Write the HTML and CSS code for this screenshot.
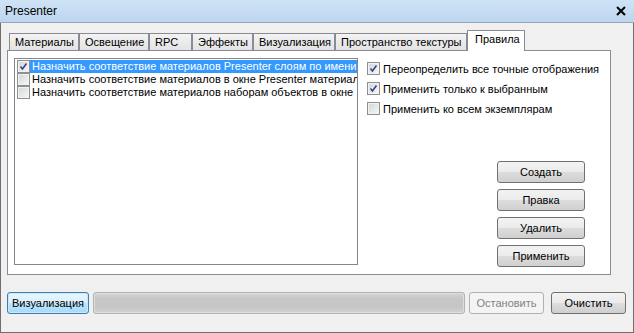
FILE: index.html
```html
<!DOCTYPE html>
<html lang="ru">
<head>
    <meta charset="UTF-8">
    <title>Presenter</title>
    <link rel="stylesheet" href="styles.css">
</head>
<body>
    <div class="window">
        <div class="titlebar">
            <span class="title">Presenter</span>
            <svg class="close" width="10" height="10" viewBox="0 0 10 10">
                <path d="M1 1 L9 9 M9 1 L1 9" stroke="#000" stroke-width="2"/>
            </svg>
        </div>

        <div class="content">
            <div class="tabs">
                <div class="tab tab-materials">Материалы</div>
                <div class="tab tab-light">Освещение</div>
                <div class="tab tab-rpc">RPC</div>
                <div class="tab tab-effects">Эффекты</div>
                <div class="tab tab-render">Визуализация</div>
                <div class="tab tab-space">Пространство текстуры</div>
                <div class="tab tab-rules active">Правила</div>
            </div>

            <div class="panel">
                <div class="listbox">
                    <div class="list-row">
                        <span class="cb checked"><svg viewBox="0 0 13 13"><path d="M3 6.5 L5.3 9.5 L10 3"/></svg></span>
                        <span class="list-text selected">Назначить соответствие материалов Presenter слоям по имени</span>
                    </div>
                    <div class="list-row">
                        <span class="cb"></span>
                        <span class="list-text">Назначить соответствие материалов в окне Presenter материалам</span>
                    </div>
                    <div class="list-row">
                        <span class="cb"></span>
                        <span class="list-text">Назначить соответствие материалов наборам объектов в окне</span>
                    </div>
                </div>

                <div class="side">
                    <div class="options">
                        <label class="option">
                            <span class="cb checked"><svg viewBox="0 0 13 13"><path d="M3 6.5 L5.3 9.5 L10 3"/></svg></span>
                            Переопределить все точные отображения
                        </label>
                        <label class="option">
                            <span class="cb checked"><svg viewBox="0 0 13 13"><path d="M3 6.5 L5.3 9.5 L10 3"/></svg></span>
                            Применить только к выбранным
                        </label>
                        <label class="option">
                            <span class="cb"></span>
                            Применить ко всем экземплярам
                        </label>
                    </div>

                    <div class="actions">
                        <button class="btn">Создать</button>
                        <button class="btn">Правка</button>
                        <button class="btn">Удалить</button>
                        <button class="btn">Применить</button>
                    </div>
                </div>
            </div>

            <div class="bottom">
                <button class="btn btn-default">Визуализация</button>
                <div class="progress"></div>
                <button class="btn btn-stop" disabled>Остановить</button>
                <button class="btn btn-clear">Очистить</button>
            </div>
        </div>
    </div>
</body>
</html>
```

FILE: styles.css
```css
body {
    margin: 0;
    font-family: "Liberation Sans", Arial, sans-serif;
    font-size: 11px;
    color: #000;
}

.window {
    width: 634px;
    height: 333px;
    box-sizing: border-box;
    border: 1px solid #6f6f6f;
    border-top: none;
    background-color: #f0f0f0;
    display: flex;
    flex-direction: column;
}

.titlebar {
    height: 22px;
    background: linear-gradient(#cfe3f6, #bcd6ef);
    border-bottom: 1px solid #9aa7b5;
    display: flex;
    align-items: center;
    justify-content: space-between;
    padding: 0 8px 0 5px;
    margin: 0 -1px;
}

.title {
    font-size: 12px;
}

.content {
    flex: 1;
    padding: 7px 0 0 6px;
}

/* tab strip */
.tabs {
    display: flex;
    align-items: flex-end;
    height: 20px;
    padding-left: 2px;
}

.tab {
    height: 17px;
    line-height: 16px;
    padding-left: 5px;
    box-sizing: border-box;
    border: 1px solid #898c95;
    border-bottom: none;
    background: linear-gradient(#f3f3f3, #e3e3e3);
    white-space: nowrap;
}

.tab-materials { width: 70px; }
.tab-light { width: 70px; }
.tab-rpc { width: 43px; }
.tab-effects { width: 61px; }
.tab-render { width: 82px; }
.tab-space { width: 132px; }
.tab-rules { width: 58px; }

.tab.active {
    height: 21px;
    line-height: 17px;
    padding-left: 7px;
    margin-bottom: -1px;
    background: #fff;
    position: relative;
    z-index: 1;
}

.panel {
    width: 604px;
    height: 225px;
    box-sizing: border-box;
    border: 1px solid #898c95;
    background: #fff;
    display: flex;
    padding: 7px 0 0 6px;
}

.listbox {
    flex: none;
    width: 344px;
    height: 207px;
    box-sizing: border-box;
    border: 1px solid #828790;
    padding: 1px 0 0 2px;
    overflow: hidden;
}

.list-row {
    display: flex;
    align-items: center;
    height: 13px;
    white-space: nowrap;
}

.list-text {
    padding: 0 1px 0 2px;
    line-height: 13px;
}

.list-text.selected {
    background-color: #3399ff;
    color: #fff;
    flex: 1;
}

/* checkboxes */
.cb {
    flex: none;
    width: 13px;
    height: 13px;
    box-sizing: border-box;
    border: 1px solid #8e8f8f;
    background: linear-gradient(135deg, #d2d4d8, #f8f8f8);
    box-shadow: inset 0 0 0 1px #f2f2f2;
    display: inline-block;
}

.cb svg {
    display: block;
    width: 11px;
    height: 11px;
}

.cb svg path {
    fill: none;
    stroke: #2c4180;
    stroke-width: 1.7;
}

.side {
    flex: 1;
    min-width: 0;
    display: flex;
    flex-direction: column;
    padding: 4px 0 0 9px;
}

.options {
    display: flex;
    flex-direction: column;
    gap: 7px;
}

.option {
    display: flex;
    align-items: center;
    gap: 3px;
    height: 13px;
    white-space: nowrap;
}

.actions {
    margin: 46px 0 0 130px;
    display: flex;
    flex-direction: column;
    gap: 6px;
}

/* buttons */
.btn {
    width: 88px;
    height: 22px;
    box-sizing: border-box;
    border: 1px solid #707070;
    border-radius: 3px;
    background: linear-gradient(#f2f2f2 0%, #ebebeb 50%, #dddddd 51%, #cfcfcf 100%);
    font-family: "Liberation Sans", Arial, sans-serif;
    font-size: 11px;
    color: #000;
    padding: 0;
}

.bottom {
    display: flex;
    align-items: center;
    margin-top: 17px;
}

.btn-default {
    width: 82px;
    border-color: #3c7fb1;
    background: linear-gradient(#eaf6fd 0%, #d9f0fc 50%, #bee6fd 51%, #a7d9f5 100%);
    box-shadow: inset 0 0 0 1px #c7e8fa;
}

.progress {
    width: 372px;
    height: 22px;
    box-sizing: border-box;
    margin-left: 4px;
    border: 1px solid #b2b2b2;
    border-radius: 3px;
    background: linear-gradient(#d6d6d6, #c6c6c6 30%, #c6c6c6 70%, #d2d2d2);
    box-shadow: inset 0 0 0 1px #dedede;
}

.btn-stop {
    width: 75px;
    margin-left: 4px;
    border-color: #adb2b5;
    background: #f4f4f4;
    color: #838383;
}

.btn-clear {
    width: 75px;
    margin-left: 7px;
}
```
